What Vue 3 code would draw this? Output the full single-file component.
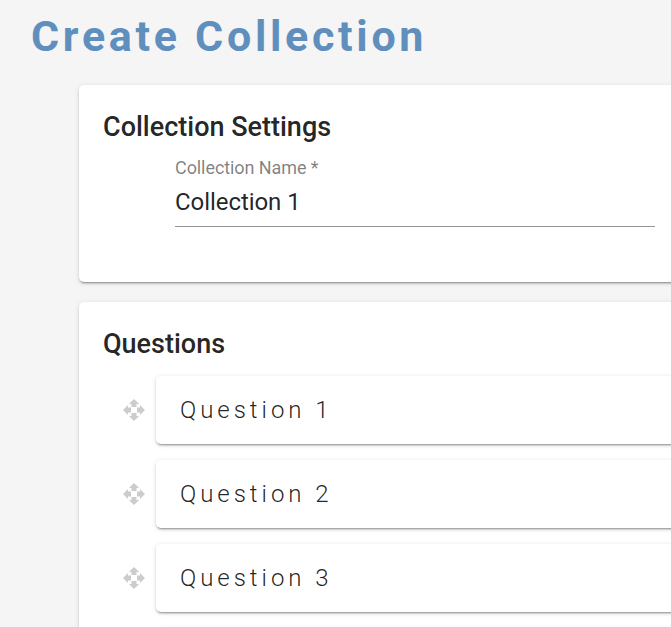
<script setup>
const questions = ['Question 1', 'Question 2', 'Question 3', '']
const collectionName = 'Collection 1'
</script>

<template>
  <main class="page">
    <h1 class="page-title">Create Collection</h1>
    <section class="card settings">
      <h2 class="card-title">Collection Settings</h2>
      <div class="field">
        <label class="field-label">Collection Name *</label>
        <div class="field-value">{{ collectionName }}</div>
      </div>
    </section>
    <section class="card questions">
      <h2 class="card-title">Questions</h2>
      <div class="list">
        <div v-for="(question, index) in questions" :key="index" class="row">
          <svg class="handle" viewBox="0 0 24 24" aria-hidden="true">
            <path d="M9.5 9h5V6h2.6L12 1 6.9 6h2.6zM9 9.5H6V6.9L1 12l5 5.1v-2.6h3zM23 12l-5-5.1v2.6h-3v5h3v2.6zM14.5 15h-5v3H6.9l5.1 5 5.1-5h-2.6z" />
          </svg>
          <div class="card question">{{ question }}</div>
        </div>
      </div>
    </section>
  </main>
</template>

<style>
body {
  margin: 0;
  background: #f5f5f5;
  overflow: hidden;
}
</style>

<style scoped>
.page {
  box-sizing: border-box;
  height: 627px;
  overflow: hidden;
  padding-left: 79px;
  background: #f5f5f5;
  color: rgba(0, 0, 0, 0.87);
  font-family: Roboto, "Liberation Sans", sans-serif;
}
.page-title {
  margin: 0 0 0 -48px;
  padding-top: 9px;
  height: 85px;
  box-sizing: border-box;
  color: #608fbd;
  font-size: 43px;
  line-height: 54px;
  font-weight: 700;
  letter-spacing: 3.7px;
  white-space: nowrap;
}
.card {
  box-sizing: border-box;
  background: #fff;
  border-radius: 5px;
  box-shadow: 0 3px 1px -2px rgba(0, 0, 0, 0.2),
    0 2px 2px 0 rgba(0, 0, 0, 0.14),
    0 1px 5px 0 rgba(0, 0, 0, 0.12);
}
.settings,
.questions {
  width: 640px;
  padding: 24px;
}
.settings {
  height: 197px;
  margin-bottom: 20px;
}
.questions {
  height: 400px;
}
.card-title {
  margin: 0;
  font-size: 27px;
  line-height: 36px;
  font-weight: 500;
}
.field {
  width: 480px;
  margin-left: 72px;
  border-bottom: 1px solid #949494;
}
.field-label {
  display: block;
  height: 40px;
  padding-top: 11px;
  box-sizing: border-box;
  color: rgba(0, 0, 0, 0.5);
  font-size: 18px;
  line-height: 24px;
  letter-spacing: -0.08px;
}
.field-value {
  height: 41px;
  padding-top: 2px;
  box-sizing: border-box;
  font-size: 24px;
  line-height: 30px;
  letter-spacing: -0.06px;
}
.list {
  display: flex;
  flex-direction: column;
  gap: 16px;
  margin-top: 14px;
}
.row {
  display: flex;
  align-items: center;
  padding-left: 19px;
}
.handle {
  flex: none;
  width: 24px;
  height: 24px;
  margin-right: 10px;
  fill: #ccc;
}
.question {
  flex: none;
  width: 560px;
  height: 68px;
  padding-left: 24px;
  font-size: 24px;
  line-height: 68px;
  font-weight: 300;
  letter-spacing: 3.96px;
}
</style>
